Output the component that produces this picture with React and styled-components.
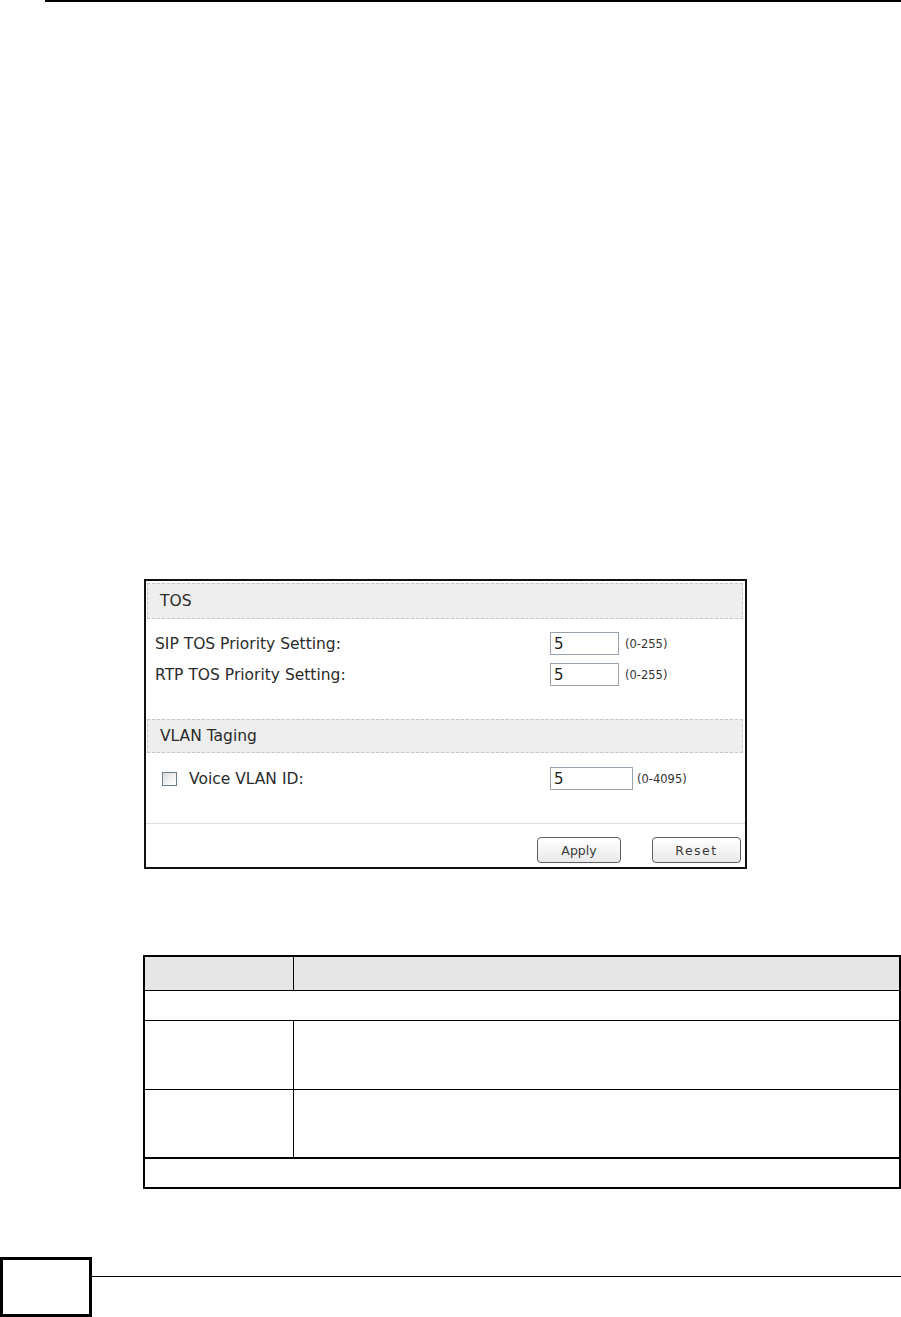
import React from "react";
import styled, { createGlobalStyle } from "styled-components";

const Global = createGlobalStyle`
  html, body { margin: 0; padding: 0; background: #ffffff; }
  body { width: 901px; min-height: 1317px; font-family: "DejaVu Sans", "Liberation Sans", sans-serif; }
`;

const Page = styled.div`
  width: 901px;
  height: 1317px;
  display: flex;
  flex-direction: column;
  overflow: hidden;
`;

const TopRule = styled.div`
  margin-left: 45px;
  height: 2px;
  background: #000;
`;

const Panel = styled.section`
  box-sizing: border-box;
  margin: 577px 0 0 144px;
  width: 603px;
  border: 2px solid #111;
  padding: 2px 1px 0 1px;
  display: flex;
  flex-direction: column;
  color: #2b2b2b;
`;

const SectionHeader = styled.div`
  box-sizing: border-box;
  height: ${(p) => p.$h}px;
  margin-right: 1px;
  background: #eeeeee;
  border: 1px dashed #c6c6c6;
  display: flex;
  align-items: center;
  padding-left: 12px;
  font-size: 15.5px;
`;

const Rows = styled.div`
  display: flex;
  flex-direction: column;
  padding: ${(p) => p.$top}px 0 29px 0;
`;

const Row = styled.div`
  height: 31px;
  display: flex;
  align-items: center;
  padding-left: 8px;
  font-size: 15.5px;
`;

const Label = styled.div`
  width: 395px;
  display: flex;
  align-items: center;
`;

const Check = styled.span`
  box-sizing: border-box;
  width: 15px;
  height: 14px;
  margin: 0 12px 0 7px;
  border: 1px solid #6f7e8c;
  background: linear-gradient(135deg, #dcdcdc 0%, #f4f4f4 60%, #ffffff 100%);
`;

const Field = styled.div`
  box-sizing: border-box;
  width: ${(p) => p.$w}px;
  height: 23px;
  border: 1px solid #98a3ad;
  background: #fff;
  padding-left: 3px;
  display: flex;
  align-items: center;
  font-size: 15px;
  color: #1e1e1e;
`;

const Hint = styled.span`
  margin-left: ${(p) => p.$ml}px;
  font-size: 11.5px;
  color: #333;
`;

const Separator = styled.div`
  height: 1px;
  background: #dedede;
  margin: 0 -1px;
`;

const ButtonBar = styled.div`
  display: flex;
  justify-content: flex-end;
  gap: 31px;
  padding: 13px 3px 4px 0;
`;

const Button = styled.button`
  box-sizing: border-box;
  width: ${(p) => p.$w}px;
  height: 26px;
  border: 1px solid #5f5f5f;
  border-radius: 4px;
  background: linear-gradient(#ffffff, #e9e9e9);
  font-family: "DejaVu Sans", sans-serif;
  font-size: 12.5px;
  letter-spacing: ${(p) => p.$ls || 0}px;
  color: #3a3a3a;
  padding: 0;
`;

const Table = styled.table`
  margin: 86px 0 0 143px;
  width: 758px;
  border-collapse: collapse;
  border: 2px solid #000;
  table-layout: fixed;
`;

const Tr = styled.tr`
  height: ${(p) => p.$h}px;
  background: ${(p) => (p.$head ? "#e6e6e6" : "#fff")};
  border-bottom: ${(p) => (p.$thick ? 2 : 1)}px solid #000;
`;

const Td = styled.td`
  border-left: 1px solid #000;
  border-right: 1px solid #000;
  padding: 0;
`;

const Footer = styled.div`
  margin-top: 68px;
  display: flex;
  align-items: flex-start;
`;

const PageBox = styled.div`
  box-sizing: border-box;
  width: 92px;
  height: 60px;
  border: 3px solid #000;
`;

const FooterRule = styled.div`
  flex: 1;
  height: 1px;
  margin-top: 19px;
  background: #000;
`;

export default function App() {
  return (
    <Page>
      <Global />
      <TopRule />
      <Panel>
        <SectionHeader $h={36}>TOS</SectionHeader>
        <Rows $top={9}>
          <Row>
            <Label>SIP TOS Priority Setting:</Label>
            <Field $w={69}>5</Field>
            <Hint $ml={6}>(0-255)</Hint>
          </Row>
          <Row>
            <Label>RTP TOS Priority Setting:</Label>
            <Field $w={69}>5</Field>
            <Hint $ml={6}>(0-255)</Hint>
          </Row>
        </Rows>
        <SectionHeader $h={34}>VLAN Taging</SectionHeader>
        <Rows $top={10}>
          <Row>
            <Label>
              <Check />
              Voice VLAN ID:
            </Label>
            <Field $w={83}>5</Field>
            <Hint $ml={4}>(0-4095)</Hint>
          </Row>
        </Rows>
        <Separator />
        <ButtonBar>
          <Button $w={84}>Apply</Button>
          <Button $w={89} $ls={1.5}>Reset</Button>
        </ButtonBar>
      </Panel>
      <Table>
        <colgroup>
          <col style={{ width: 149 }} />
          <col />
        </colgroup>
        <tbody>
          <Tr $h={34} $head>
            <Td />
            <Td />
          </Tr>
          <Tr $h={30}>
            <Td colSpan={2} />
          </Tr>
          <Tr $h={69}>
            <Td />
            <Td />
          </Tr>
          <Tr $h={69} $thick>
            <Td />
            <Td />
          </Tr>
          <Tr $h={30}>
            <Td colSpan={2} />
          </Tr>
        </tbody>
      </Table>
      <Footer>
        <PageBox />
        <FooterRule />
      </Footer>
    </Page>
  );
}
